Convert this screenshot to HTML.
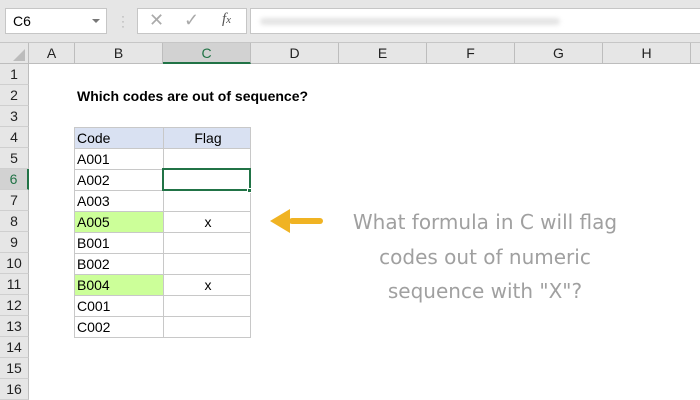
<!DOCTYPE html>
<html><head><style>
*{margin:0;padding:0;box-sizing:border-box}
body{width:700px;height:400px;overflow:hidden;background:#fff;font-family:"Liberation Sans",Arial,sans-serif;position:relative}
.a{position:absolute}
.top{left:0;top:0;width:700px;height:43px;background:#e6e6e6;border-bottom:1px solid #c6c6c6}
.ch{top:43px;height:21px;background:#e6e6e6;border-right:1px solid #bdbdbd;border-bottom:1px solid #bdbdbd;font-size:14px;color:#222;text-align:center;line-height:21px}
.rh{left:0;width:29px;height:21px;background:#e6e6e6;border-right:1px solid #bdbdbd;border-bottom:1px solid #cfcfcf;font-size:14px;color:#222;text-align:center;line-height:21px}
.c{height:21px;border:1px solid #c8c8c8;font-size:14px;line-height:20px;color:#000;padding-left:2px}
.t{font-family:"DejaVu Sans",sans-serif;color:#a0a0a0;font-size:20px;text-align:center;width:340px;left:315px}
</style></head><body>
<div class="a top"></div>
<div class="a" style="left:5px;top:8px;width:102px;height:26px;background:#fff;border:1px solid #c6c6c6;font-size:14px;line-height:24px;padding-left:7px">C6</div>
<div class="a" style="left:92px;top:19px;width:0;height:0;border-left:4px solid transparent;border-right:4px solid transparent;border-top:4px solid #777"></div>
<div class="a" style="left:121px;top:14px;color:#aaa;font-size:12px;line-height:5px">·<br>·<br>·</div>
<div class="a" style="left:137px;top:8px;width:110px;height:26px;background:#fff;border:1px solid #c6c6c6"></div>
<div class="a" style="left:149px;top:10px;color:#aaa;font-size:18px">✕</div>
<div class="a" style="left:184px;top:10px;color:#aaa;font-size:18px">✓</div>
<div class="a" style="left:222px;top:11px;color:#555;font-size:15px;font-style:italic;font-family:'Liberation Serif',serif">f<span style="font-size:11px">x</span></div>
<div class="a" style="left:250px;top:8px;width:450px;height:26px;background:#fff;border:1px solid #c6c6c6;border-right:none"></div>
<div class="a" style="left:260px;top:18px;width:300px;height:7px;background:#e4e4e4;border-radius:4px;filter:blur(2px)"></div>

<div class="a ch" style="left:0;width:29px"></div>
<div class="a" style="left:13px;top:49px;width:0;height:0;border-left:12px solid transparent;border-bottom:12px solid #bcbcbc"></div>
<div class="a ch" style="left:29px;width:46px">A</div>
<div class="a ch" style="left:75px;width:88px">B</div>
<div class="a ch" style="left:163px;width:88px;background:#d2d2d2;border-bottom:2px solid #217346;color:#217346">C</div>
<div class="a ch" style="left:251px;width:88px">D</div>
<div class="a ch" style="left:339px;width:88px">E</div>
<div class="a ch" style="left:427px;width:88px">F</div>
<div class="a ch" style="left:515px;width:88px">G</div>
<div class="a ch" style="left:603px;width:88px">H</div>
<div class="a ch" style="left:691px;width:20px"></div>

<div class="a rh" style="top:64px">1</div>
<div class="a rh" style="top:85px">2</div>
<div class="a rh" style="top:106px">3</div>
<div class="a rh" style="top:127px">4</div>
<div class="a rh" style="top:148px">5</div>
<div class="a rh" style="top:169px;background:#d2d2d2;border-right:2px solid #217346;color:#217346">6</div>
<div class="a rh" style="top:190px">7</div>
<div class="a rh" style="top:211px">8</div>
<div class="a rh" style="top:232px">9</div>
<div class="a rh" style="top:253px">10</div>
<div class="a rh" style="top:274px">11</div>
<div class="a rh" style="top:295px">12</div>
<div class="a rh" style="top:316px">13</div>
<div class="a rh" style="top:337px">14</div>
<div class="a rh" style="top:358px">15</div>
<div class="a rh" style="top:379px">16</div>

<div class="a" style="left:77px;top:88px;font-size:14px;font-weight:bold">Which codes are out of sequence?</div>

<div class="a" style="left:74px;top:127px">
<table style="border-collapse:collapse;font-size:14px">
<tr style="background:#d9e1f2"><td class="c" style="width:89px">Code</td><td class="c" style="width:87px;text-align:center">Flag</td></tr>
<tr><td class="c">A001</td><td class="c"></td></tr>
<tr><td class="c">A002</td><td class="c"></td></tr>
<tr><td class="c">A003</td><td class="c"></td></tr>
<tr><td class="c" style="background:#ccff99">A005</td><td class="c" style="text-align:center">x</td></tr>
<tr><td class="c">B001</td><td class="c"></td></tr>
<tr><td class="c">B002</td><td class="c"></td></tr>
<tr><td class="c" style="background:#ccff99">B004</td><td class="c" style="text-align:center">x</td></tr>
<tr><td class="c">C001</td><td class="c"></td></tr>
<tr><td class="c">C002</td><td class="c"></td></tr>
</table></div>
<div class="a" style="left:162px;top:168px;width:89px;height:23px;border:2px solid #217346"></div>
<div class="a" style="left:247px;top:188px;width:5px;height:5px;background:#217346;border:1px solid #fff"></div>

<svg class="a" style="left:268px;top:208px" width="56" height="26"><path d="M52 13H24" stroke="#f0b323" stroke-width="6" stroke-linecap="round"/><path d="M2 13L22 1V25Z" fill="#f0b323"/></svg>

<div class="a t" style="top:210px">What formula in C will flag</div>
<div class="a t" style="top:245px">codes out of numeric</div>
<div class="a t" style="top:279px">sequence with "X"?</div>
</body></html>
